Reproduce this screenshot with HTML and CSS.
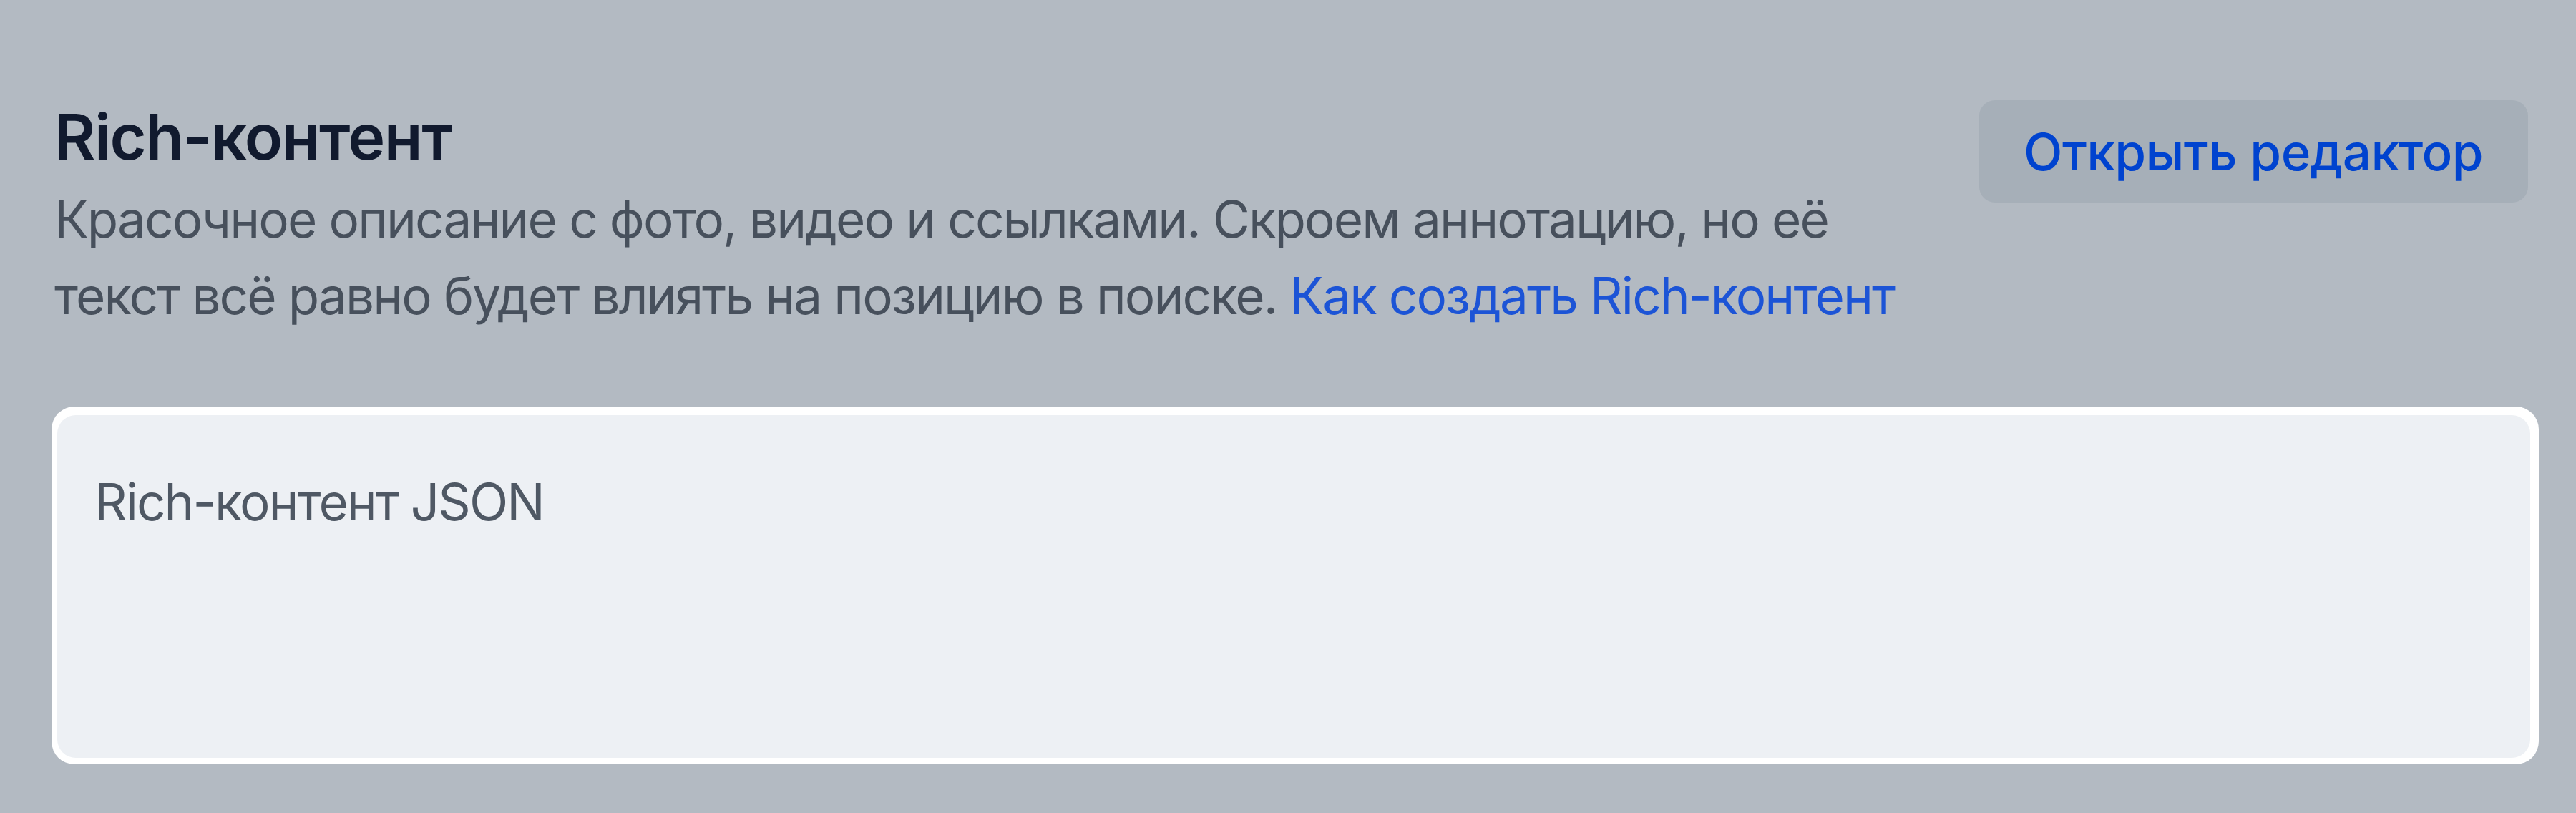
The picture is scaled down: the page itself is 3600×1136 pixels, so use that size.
FILE: index.html
```html
<!DOCTYPE html>
<html lang="ru">
<head>
    <meta charset="UTF-8">
    <meta name="viewport" content="width=device-width, initial-scale=1.0">
    <title>Rich-контент</title>
    <link rel="stylesheet" href="styles.css">
</head>
<body>
    <div class="rich">
      <div class="rich-head">
        <div class="rich-info">
          <h2 class="rich-title">Rich-контент</h2>
          <p class="rich-desc">Красочное описание с фото, видео и ссылками. Скроем аннотацию, но её текст всё равно будет влиять на позицию в поиске. <a href="#" class="rich-link">Как создать Rich-контент</a></p>
        </div>
        <button class="editor-btn">Открыть редактор</button>
      </div>
      <div class="rich-field">
        <textarea class="rich-input" placeholder="Rich-контент JSON"></textarea>
      </div>
    </div>
</body>
</html>
```
FILE: styles.css
```css
body{
margin: 0;
background: #b3bac2;
font-family: Inter, "Noto Sans", sans-serif;
}

.rich{
padding: 129px 52px 68px 72px;
}

.rich-head{
display: flex;
justify-content: space-between;
align-items: flex-start;
padding: 0 15px 0 4px;
}

.rich-title{
margin: 0;
font-size: 88px;
line-height: 124px;
font-weight: 600;
letter-spacing: -1.5px;
color: #111a2e;
}

.rich-desc{
margin: 0;
width: 2640px;
font-size: 71px;
line-height: 107px;
letter-spacing: -1.9px;
color: #47505c;
}

.rich-link{
color: #1c54d6;
text-decoration: none;
}

.editor-btn{
margin-top: 11px;
height: 143px;
padding: 0 63px 0 62px;
border: none;
border-radius: 22px;
background: #a6afb8;
color: #0043cf;
font-family: inherit;
font-size: 71px;
font-weight: 500;
letter-spacing: -0.6px;
white-space: nowrap;
}

.rich-field{
margin-top: 101px;
padding: 12px 12px 9px 8px;
background: #fff;
border-radius: 32px;
}

.rich-input{
display: block;
box-sizing: border-box;
width: 100%;
height: 479px;
padding: 68px 52px;
border: none;
border-radius: 26px;
background: #edf0f4;
font-family: inherit;
font-size: 71px;
line-height: 107px;
letter-spacing: -2px;
color: #1d2633;
resize: none;
outline: none;
}

.rich-input::placeholder{
color: #4f5864;
}
```
